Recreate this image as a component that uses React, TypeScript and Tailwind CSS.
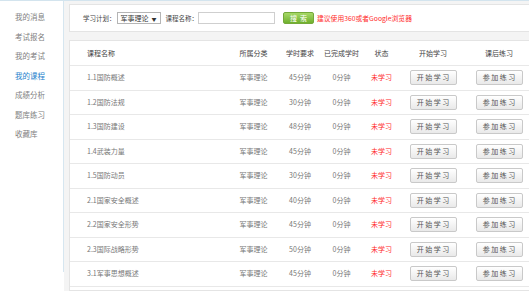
import React from "react";

const menu = ["我的消息", "考试报名", "我的考试", "我的课程", "成绩分析", "题库练习", "收藏库"];

const rows: [string, string][] = [
  ["1.1国防概述", "45分钟"],
  ["1.2国防法规", "30分钟"],
  ["1.3国防建设", "48分钟"],
  ["1.4武装力量", "45分钟"],
  ["1.5国防动员", "30分钟"],
  ["2.1国家安全概述", "40分钟"],
  ["2.2国家安全形势", "45分钟"],
  ["2.3国际战略形势", "50分钟"],
  ["3.1军事思想概述", "45分钟"],
];

function Btn({ label }: { label: string }) {
  return (
    <div className="w-[47px] h-[15px] flex items-center justify-center rounded-[2px] border border-[#c9c9c9] bg-gradient-to-b from-[#ffffff] to-[#e9e9e9] text-[#555] tracking-[1.5px] pl-[1.5px]">
      {label}
    </div>
  );
}

function Row({ cells, header }: { cells: React.ReactNode[]; header?: boolean }) {
  return (
    <div className={`flex items-center border-b border-[#e8e8e8] ${header ? "h-[25px] text-[#444]" : "h-[24.5px] text-[#777]"}`}>
      <div className="w-[166px] pl-[17px] whitespace-nowrap">{cells[0]}</div>
      <div className="w-[35px] flex justify-center whitespace-nowrap">{cells[1]}</div>
      <div className="w-[58px] flex justify-center whitespace-nowrap">{cells[2]}</div>
      <div className="w-[25px] flex justify-center whitespace-nowrap">{cells[3]}</div>
      <div className="w-[55px] flex justify-center whitespace-nowrap">{cells[4]}</div>
      <div className="w-[48px] flex justify-center whitespace-nowrap">{cells[5]}</div>
      <div className="w-[84px] flex justify-center whitespace-nowrap">{cells[6]}</div>
    </div>
  );
}

export default function App() {
  return (
    <div
      className="w-[529px] h-[291px] overflow-hidden bg-white border-t border-[#d3e4ee] flex text-[7px] leading-none"
      style={{ fontFamily: '"Noto Sans CJK SC", "Noto Sans", sans-serif' }}
    >
      <div className="w-[64px] shrink-0 flex flex-col">
        <div className="h-[271px] border-r border-[#d6e6f0] pt-[6px] flex flex-col">
          {menu.map((m) => (
            <div
              key={m}
              className={`h-[19.5px] flex items-center pl-[15px] text-[7.5px] ${m === "我的课程" ? "text-[#1b7fcc]" : "text-[#808080]"}`}
            >
              {m}
            </div>
          ))}
        </div>
      </div>
      <div className="flex-1 bg-[#f4f4f4] pl-[5px] pt-[3px] flex flex-col gap-[8px] overflow-hidden">
        <div className="w-[473px] shrink-0 h-[28px] bg-white border border-[#e4e4e4] flex items-center pl-[13px] text-[#444] text-[6.5px]">
          <span className="whitespace-nowrap">学习计划：</span>
          <div className="ml-[1px] w-[44px] h-[12px] border border-[#b5b5b5] bg-white flex items-center justify-between px-[3px] text-[#333] text-[7px]">
            <span className="whitespace-nowrap">军事理论</span>
            <span className="text-[5px]">▼</span>
          </div>
          <span className="ml-[5px] whitespace-nowrap">课程名称：</span>
          <div className="ml-[0px] w-[77px] h-[12px] border border-[#cfcfcf] bg-white" />
          <div className="ml-[8px] w-[31px] h-[12px] rounded-[2px] border border-[#74a83a] bg-gradient-to-b from-[#a6d866] to-[#6fb02c] text-white flex items-center justify-center whitespace-nowrap text-[7px]">
            搜&nbsp;&nbsp;索
          </div>
          <span className="ml-[3px] text-[#ff2b2b] whitespace-nowrap text-[6.8px]">建议使用360或者Google浏览器</span>
        </div>
        <div className="w-[473px] shrink-0 flex-1 bg-white border border-[#e4e4e4]">
          <Row header cells={["课程名称", "所属分类", "学时要求", "已完成学时", "状态", "开始学习", "课后练习"]} />
          {rows.map(([n, t]) => (
            <Row
              key={n}
              cells={[
                n,
                "军事理论",
                t,
                "0分钟",
                <span className="text-[#ff2b2b]">未学习</span>,
                <Btn label="开始学习" />,
                <Btn label="参加练习" />,
              ]}
            />
          ))}
        </div>
      </div>
    </div>
  );
}
